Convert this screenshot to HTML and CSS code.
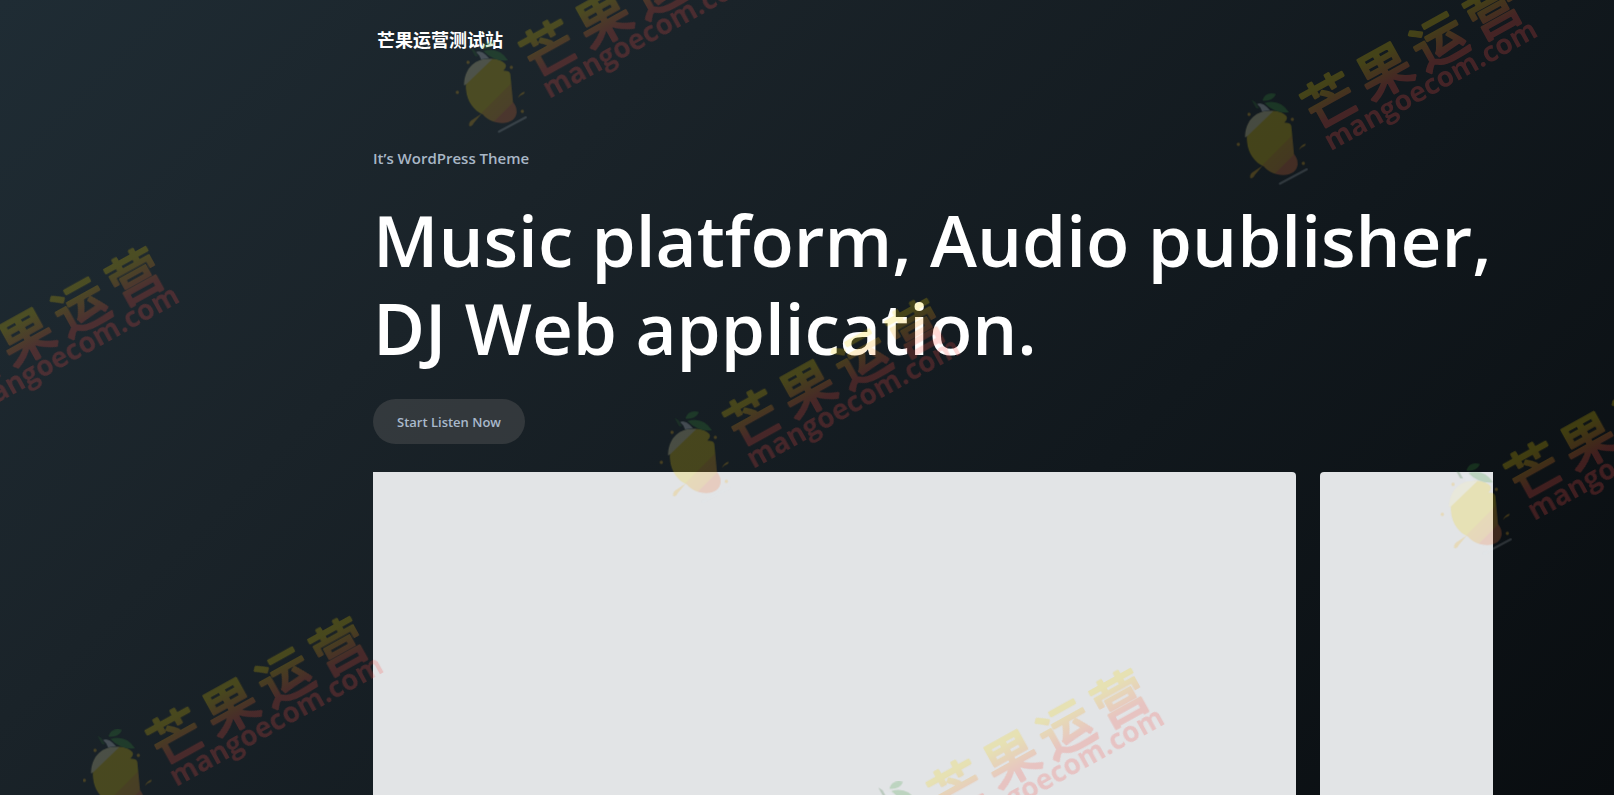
FILE: index.html
```html
<!DOCTYPE html>
<html lang="zh">
<head>
  <meta charset="UTF-8">
  <meta name="viewport" content="width=device-width, initial-scale=1.0">
  <title>芒果运营测试站</title>
  <link rel="stylesheet" href="styles.css">
</head>
<body>
  <div class="page">
    <header class="header">
      <a class="site-title" href="#">芒果运营测试站</a>
    </header>

    <main>
      <section class="hero">
        <p class="tagline">It’s WordPress Theme</p>
        <h1>Music platform, Audio publisher,<br>DJ Web application.</h1>
        <button class="btn" type="button">Start Listen Now</button>
      </section>

      <section class="slider">
        <div class="slide slide-first"></div>
        <div class="slide"></div>
      </section>
    </main>
  </div>

  <!-- watermark -->
  <svg class="watermark" aria-hidden="true">
    <defs>
      <linearGradient id="wm-text" gradientUnits="userSpaceOnUse" x1="0" y1="-215" x2="0" y2="-65">
        <stop offset="0.2" stop-color="#f5d400"/>
        <stop offset="0.85" stop-color="#fa5042"/>
      </linearGradient>
      <linearGradient id="wm-body" gradientUnits="userSpaceOnUse" x1="100" y1="380" x2="220" y2="500">
        <stop offset="0.6" stop-color="#f5d40a"/>
        <stop offset="0.6" stop-color="#f5b41e"/>
        <stop offset="0.86" stop-color="#f5a528"/>
        <stop offset="0.86" stop-color="#f5783c"/>
      </linearGradient>
      <g id="mark" transform="scale(0.3333)">
        <path fill="url(#wm-body)" d="M140 336C160 329 185 334 198 347Q206 355 193 368Q212 368 214 378L222 462Q234 476 233 494C230 514 214 525 190 525C165 525 143 514 132 500C105 488 84 462 81 425C78 380 102 345 140 336Z"/>
        <path fill="#fff5b4" d="M75 413C74 365 106 326 160 333L82 408Z"/>
        <path fill="#e6eef5" d="M111 312Q126 306 141 321L150 331L126 334Q122 320 111 312Z"/>
        <path fill="#3c9b3c" d="M133 309Q180 296 207 337Q165 341 133 309ZM127 302Q135 274 168 282Q157 305 127 302Z"/>
        <path fill="#2f6e32" d="M94 299L107 307L117 326L108 324Z"/>
        <g fill="#f5b41e">
          <circle cx="87" cy="343" r="5"/>
          <circle cx="217" cy="358" r="5"/>
          <circle cx="55" cy="433" r="5"/>
          <circle cx="250" cy="490" r="5"/>
          <path d="M128 497L104 525Q100 535 91 535Q88 525 96 518Z"/>
          <path d="M236 450Q245 433 256 431Q259 439 245 442Z"/>
        </g>
        <path stroke="#dfe8f0" stroke-opacity="0.7" stroke-width="7" stroke-linecap="round" d="M180 551L260 508"/>
        <g transform="translate(332 454) rotate(-29)">
          <text class="wm-cn" fill="url(#wm-text)" stroke="url(#wm-text)" x="-8 178 364 550" y="-73">芒果运营</text>
          <text class="wm-url" x="0" y="0">mangoecom.com</text>
        </g>
      </g>
    </defs>
    <g class="marks">
      <use href="#mark" x="439" y="-52"/>
      <use href="#mark" x="1220" y="0"/>
      <use href="#mark" x="-138" y="266"/>
      <use href="#mark" x="643" y="318"/>
      <use href="#mark" x="1424" y="370"/>
      <use href="#mark" x="66" y="636"/>
      <use href="#mark" x="847" y="688"/>
    </g>
  </svg>
</body>
</html>
```

FILE: styles.css
```css
* { box-sizing: border-box; }
body { position: relative; height: 100vh; margin: 0; overflow: hidden; background: linear-gradient(135deg, #1f2c34 0%, #1a2329 30%, #11181d 65%, #090d10 100%); color: #fff; font-family: "Open Sans", "Noto Sans CJK SC", sans-serif; }
.page { display: flex; flex-direction: column; max-width: 1120px; height: 100%; margin: 0 auto; }
.header { display: flex; align-items: center; height: 78px; padding: 0 4px; }
.site-title { color: #fff; font-size: 18px; font-weight: 700; text-decoration: none; }
main { display: flex; flex: 1; flex-direction: column; }
.hero { padding: 68px 0 28px; }
.tagline { margin: 0; color: #a9b7c6; font-size: 15px; font-weight: 600; line-height: 24px; }
h1 { margin: 26px 0 27px; font-size: 71px; font-weight: 600; line-height: 88px; white-space: nowrap; }
.btn { height: 45px; padding: 0 24px; border: none; border-radius: 23px; background: rgba(78,80,82,0.5); color: #a9b9cc; font-family: inherit; font-size: 13px; font-weight: 600; }
.slider { display: flex; flex: 1; gap: 24px; overflow: hidden; }
.slide { flex: 0 0 923px; border-radius: 4px 4px 0 0; background: #e2e4e6; }
.slide-first { border-radius: 0 4px 0 0; }
.watermark { position: absolute; top: 0; left: 0; width: 100%; height: 100%; pointer-events: none; }
.marks { opacity: 0.22; }
.wm-cn { font-family: "Noto Sans CJK SC", sans-serif; font-size: 160px; font-weight: 400; stroke-width: 8px; stroke-linejoin: round; }
.wm-url { fill: #fa4f4a; font-family: "Open Sans", sans-serif; font-size: 84px; font-weight: 700; }

@media (min-width: 1400px) {
  body { padding-left: 252px; }
}
```
